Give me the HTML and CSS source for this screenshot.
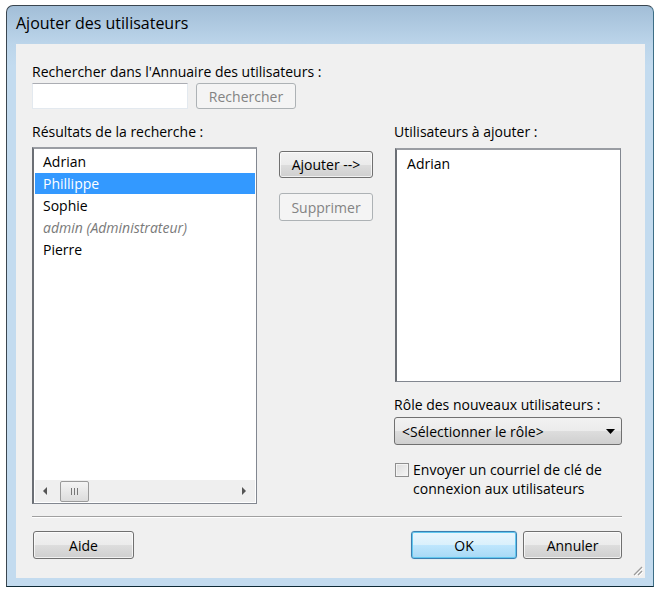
FILE: index.html
```html
<!DOCTYPE html>
<html lang="fr">
<head>
<meta charset="utf-8">
<title>Ajouter des utilisateurs</title>
<link rel="stylesheet" href="styles.css">
</head>
<body>
<div class="window">
  <div class="titlebar">Ajouter des utilisateurs</div>
  <div class="content">
    <div class="label search-label">Rechercher dans l'Annuaire des utilisateurs :</div>
    <div class="search-row">
      <div class="textbox"></div>
      <div class="btn btn-disabled btn-search">Rechercher</div>
    </div>
    <div class="main">
      <div class="col-left">
        <div class="label">Résultats de la recherche :</div>
        <div class="listbox listbox-left">
          <div class="items">
            <div class="item">Adrian</div>
            <div class="item selected">Phillippe</div>
            <div class="item">Sophie</div>
            <div class="item muted">admin (Administrateur)</div>
            <div class="item">Pierre</div>
          </div>
          <div class="hscroll">
            <div class="arrow arrow-left"></div>
            <div class="thumb"><span></span><span></span><span></span></div>
            <div class="track"></div>
            <div class="arrow arrow-right"></div>
          </div>
        </div>
      </div>
      <div class="col-mid">
        <div class="btn btn-add">Ajouter --&gt;</div>
        <div class="btn btn-disabled btn-remove">Supprimer</div>
      </div>
      <div class="col-right">
        <div class="label">Utilisateurs à ajouter :</div>
        <div class="listbox listbox-right">
          <div class="item">Adrian</div>
        </div>
        <div class="label role-label">Rôle des nouveaux utilisateurs :</div>
        <div class="combo">
          <span>&lt;Sélectionner le rôle&gt;</span>
          <svg class="combo-arrow" width="9" height="5" viewBox="0 0 9 5"><path d="M0 0H9L4.5 5Z" fill="#000"/></svg>
        </div>
        <div class="check-row">
          <div class="checkbox"></div>
          <div class="check-text">Envoyer un courriel de clé de<br>connexion aux utilisateurs</div>
        </div>
      </div>
    </div>
    <div class="separator"></div>
    <div class="footer">
      <div class="btn btn-help">Aide</div>
      <div class="footer-right">
        <div class="btn btn-default btn-ok">OK</div>
        <div class="btn btn-cancel">Annuler</div>
      </div>
    </div>
    <svg class="grip" width="12" height="12" viewBox="0 0 12 12">
      <path d="M11 3L3 11M11 7L7 11" stroke="#9a9a9a" stroke-width="1.2"/>
      <path d="M12 4L4 12M12 8L8 12" stroke="#ffffff" stroke-width="1"/>
    </svg>
  </div>
</div>
</body>
</html>
```
FILE: styles.css
```css
html, body {
  margin: 0;
  padding: 0;
  background: #ffffff;
}
body {
  font-family: "Open Sans", "Noto Sans", sans-serif;
  font-size: 14px;
  color: #000;
  padding: 5px 2px 2px 6px;
}
.window {
  width: 646px;
  height: 580px;
  border: 1px solid #3a4650;
  border-bottom-color: #0f2a36;
  border-right-color: #3d6e86;
  border-radius: 7px 7px 0 0;
  background: linear-gradient(to bottom, #a2bed7 0px, #bcd5ea 38px, #c3dbef 60px, #c3dbef 100%);
  display: flex;
  flex-direction: column;
  box-sizing: content-box;
}
.titlebar {
  height: 38px;
  line-height: 34px;
  padding-left: 9px;
  font-size: 16px;
  color: #000;
}
.content {
  position: relative;
  margin: 0 8px 0 9px;
  height: 534px;
  background: #f0f0f0;
  padding: 0 23px 0 16px;
  display: flex;
  flex-direction: column;
}
.label {
  line-height: 18px;
  height: 18px;
  white-space: nowrap;
}
.search-label {
  margin-top: 19px;
}
.search-row {
  display: flex;
  gap: 8px;
  margin-top: 2px;
}
.textbox {
  width: 154px;
  height: 24px;
  background: #fff;
  border: 1px solid #e3e9ef;
  border-top-color: #abadb3;
}
.btn {
  box-sizing: border-box;
  height: 28px;
  border: 1px solid #707070;
  border-radius: 3px;
  background: linear-gradient(to bottom, #f2f2f2 0%, #ebebeb 50%, #dddddd 51%, #cfcfcf 100%);
  display: flex;
  align-items: center;
  justify-content: center;
  white-space: nowrap;
  box-shadow: inset 0 0 0 1px rgba(255,255,255,0.7);
}
.btn-disabled {
  border-color: #adb2b5;
  background: #f4f4f4;
  color: #838383;
  box-shadow: none;
}
.btn-search {
  width: 100px;
  height: 26px;
}
.main {
  display: flex;
  margin-top: 14px;
}
.col-left {
  width: 227px;
  display: flex;
  flex-direction: column;
}
.listbox {
  box-sizing: border-box;
  background: #fff;
  border: 1px solid #828790;
  border-left: 2px solid #6b6f75;
  border-top: 2px solid #9a9da3;
}
.listbox-left {
  margin-top: 6px;
  height: 357px;
  display: flex;
  flex-direction: column;
  padding: 2px 1px 1px 1px;
}
.items {
  flex: 1;
}
.item {
  height: 22px;
  line-height: 21px;
  padding-left: 8px;
  white-space: nowrap;
}
.item.selected {
  background: #3399ff;
  color: #fff;
  height: 21px;
  margin-bottom: 1px;
}
.item.muted {
  color: #7a7a7a;
  font-style: italic;
}
.hscroll {
  height: 22px;
  background: #efefef;
  display: flex;
  align-items: center;
}
.arrow {
  width: 0;
  height: 0;
  border-top: 4px solid transparent;
  border-bottom: 4px solid transparent;
}
.arrow-left {
  border-right: 4px solid #555;
  margin-left: 8px;
}
.arrow-right {
  border-left: 4px solid #555;
  margin-right: 9px;
}
.thumb {
  box-sizing: border-box;
  margin-left: 13px;
  width: 29px;
  height: 21px;
  border: 1px solid #9a9a9a;
  border-radius: 2px;
  background: linear-gradient(to bottom, #f4f4f4, #dcdcdc);
  display: flex;
  align-items: center;
  justify-content: center;
  gap: 2px;
}
.thumb span {
  width: 1px;
  height: 7px;
  background: #777;
}
.track {
  flex: 1;
}
.col-mid {
  width: 95px;
  margin-left: 22px;
  padding-top: 28px;
  display: flex;
  flex-direction: column;
}
.btn-add {
  height: 27px;
}
.btn-remove {
  margin-top: 15px;
  height: 28px;
}
.col-right {
  margin-left: 21px;
  width: 230px;
  display: flex;
  flex-direction: column;
}
.listbox-right {
  margin-top: 7px;
  margin-left: 1px;
  width: 226px;
  height: 234px;
  padding-top: 3px;
  padding-left: 2px;
}
.role-label {
  margin-top: 14px;
}
.combo {
  box-sizing: border-box;
  margin-top: 3px;
  height: 28px;
  border: 1px solid #707070;
  border-radius: 3px;
  background: linear-gradient(to bottom, #f2f2f2 0%, #ebebeb 50%, #dddddd 51%, #cfcfcf 100%);
  display: flex;
  align-items: center;
  justify-content: space-between;
  padding: 0 6px 0 7px;
  white-space: nowrap;
}
.combo-arrow {
  display: block;
}
.check-row {
  display: flex;
  margin-top: 16px;
  gap: 4px;
}
.checkbox {
  box-sizing: border-box;
  width: 14px;
  height: 14px;
  margin-top: 2px;
  margin-left: 1px;
  border: 1px solid #8f8f8f;
  background: linear-gradient(135deg, #dcdcdc, #f6f6f6);
  box-shadow: inset 0 0 0 1px #f4f4f4;
}
.check-text {
  line-height: 19px;
  margin-top: -1px;
}
.separator {
  margin-top: 12px;
  height: 0;
  border-top: 1px solid #a0a0a0;
  border-bottom: 1px solid #ffffff;
}
.footer {
  margin-top: 13px;
  display: flex;
  justify-content: space-between;
}
.btn-help {
  width: 101px;
  margin-left: 1px;
}
.footer-right {
  display: flex;
  gap: 6px;
}
.btn-ok {
  width: 106px;
}
.btn-default {
  border-color: #3c7fb1;
  background: linear-gradient(to bottom, #eaf6fd 0%, #d9f0fc 50%, #bee6fd 51%, #a7d9f5 100%);
  box-shadow: inset 0 0 0 1px #61c8ef, 0 0 1px #7ad0f0;
}
.btn-cancel {
  width: 99px;
}
.grip {
  position: absolute;
  right: 2px;
  bottom: 2px;
}
```
